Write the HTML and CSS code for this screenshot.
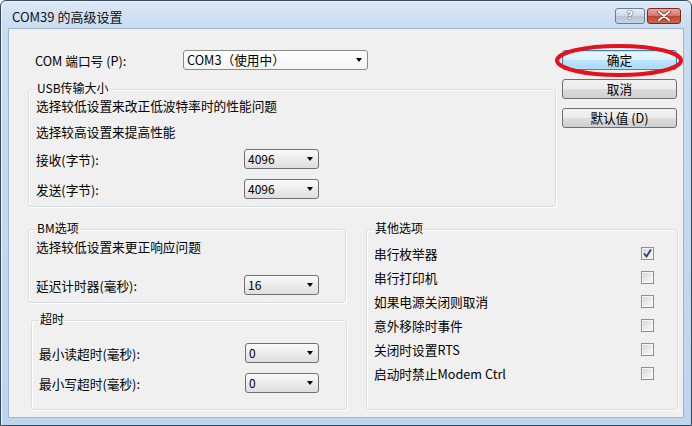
FILE: index.html
```html
<!DOCTYPE html>
<html lang="zh-CN">
<head>
    <meta charset="UTF-8">
    <meta name="viewport" content="width=device-width, initial-scale=1.0">
    <title>COM39 的高级设置</title>
    <link rel="stylesheet" href="styles.css">
</head>
<body>

<div class="window">
    <div class="titlebar">
        <span class="title">COM39 的高级设置</span>
        <div class="caption-buttons">
            <span class="cap help">?</span>
            <span class="cap close">
                <svg width="14" height="10" viewBox="0 0 14 10">
                    <path d="M2 1 L12 9 M12 1 L2 9" stroke="#5a1a10" stroke-width="3.4" stroke-linecap="round"/>
                    <path d="M2 1 L12 9 M12 1 L2 9" stroke="#fff" stroke-width="2.2" stroke-linecap="round"/>
                </svg>
            </span>
        </div>
    </div>

    <div class="client">
        <div class="top">
            <div class="left">
                <div class="port-row">
                    <span class="port-label">COM 端口号 (P):</span>
                    <div class="combo port-combo">COM3（使用中）<i class="arrow"></i></div>
                </div>

                <fieldset class="group usb">
                    <legend>USB传输大小</legend>
                    <p class="note">选择较低设置来改正低波特率时的性能问题</p>
                    <p class="note second">选择较高设置来提高性能</p>
                    <div class="field first">
                        <span class="field-label">接收(字节):</span>
                        <div class="combo">4096<i class="arrow"></i></div>
                    </div>
                    <div class="field">
                        <span class="field-label">发送(字节):</span>
                        <div class="combo">4096<i class="arrow"></i></div>
                    </div>
                </fieldset>
            </div>

            <div class="buttons">
                <div class="btn-wrap">
                    <button class="btn default">确定</button>
                    <svg class="mark" width="130" height="37" viewBox="0 0 130 37">
                        <ellipse cx="65" cy="18.5" rx="62" ry="14.5" fill="none" stroke="#e3121b" stroke-width="4"/>
                    </svg>
                </div>
                <button class="btn">取消</button>
                <button class="btn">默认值 (D)</button>
            </div>
        </div>

        <div class="bottom">
            <div class="left-col">
                <fieldset class="group bm">
                    <legend>BM选项</legend>
                    <p class="note">选择较低设置来更正响应问题</p>
                    <div class="field latency">
                        <span class="field-label">延迟计时器(毫秒):</span>
                        <div class="combo">16<i class="arrow"></i></div>
                    </div>
                </fieldset>

                <fieldset class="group timeout">
                    <legend>超时</legend>
                    <div class="field first">
                        <span class="field-label">最小读超时(毫秒):</span>
                        <div class="combo">0<i class="arrow"></i></div>
                    </div>
                    <div class="field">
                        <span class="field-label">最小写超时(毫秒):</span>
                        <div class="combo">0<i class="arrow"></i></div>
                    </div>
                </fieldset>
            </div>

            <fieldset class="group other">
                <legend>其他选项</legend>
                <div class="option">
                    <span>串行枚举器</span>
                    <span class="check checked">
                        <svg width="11" height="11" viewBox="0 0 11 11">
                            <path d="M2 5.5 L4.5 8.5 L9 1.5" fill="none" stroke="#2a3c78" stroke-width="1.8"/>
                        </svg>
                    </span>
                </div>
                <div class="option"><span>串行打印机</span><span class="check"></span></div>
                <div class="option"><span>如果电源关闭则取消</span><span class="check"></span></div>
                <div class="option"><span>意外移除时事件</span><span class="check"></span></div>
                <div class="option"><span>关闭时设置RTS</span><span class="check"></span></div>
                <div class="option"><span>启动时禁止Modem Ctrl</span><span class="check"></span></div>
            </fieldset>
        </div>
    </div>
</div>

</body>
</html>
```

FILE: styles.css
```css
/* Reset */
* {
    box-sizing: border-box;
    margin: 0;
    padding: 0;
}

body {
    width: 692px;
    height: 426px;
    overflow: hidden;
    font-family: "Noto Sans CJK SC", "Noto Sans", sans-serif;
    font-size: 12.7px;
    color: #000;
    background: #fff;
}

/* Window frame */
.window {
    width: 692px;
    height: 426px;
    border: 1px solid #34485e;
    border-radius: 6px 6px 0 0;
    background: linear-gradient(#dbe8f6, #c9dcf0 27px, #bfd5ed);
    box-shadow: inset 1px 1px 0 #eef5fc;
    display: flex;
    flex-direction: column;
}

.titlebar {
    height: 27px;
    display: flex;
    justify-content: space-between;
}

.title {
    padding: 8px 0 0 11px;
    font-size: 13px;
    line-height: 16px;
    color: #111;
}

.caption-buttons {
    display: flex;
    gap: 2px;
    margin: 7px 10px 0 0;
}

.cap {
    height: 16px;
    border-radius: 3px;
    display: flex;
    align-items: center;
    justify-content: center;
}

.help {
    width: 30px;
    border: 1px solid #6b7d92;
    background: linear-gradient(#e6eef7, #cdd9e7 50%, #b6c7da 50%, #c4d3e4);
    color: #fff;
    font-family: "DejaVu Sans", sans-serif;
    font-weight: bold;
    font-size: 11px;
    line-height: 14px;
    text-shadow: 0 0 2px #3c4b5e, 0 0 1px #3c4b5e;
}

.close {
    width: 34px;
    border: 1px solid #7a2a1f;
    background: linear-gradient(#e9a898, #d47763 50%, #c2442d 50%, #d0664c);
}

/* Client area */
.client {
    height: 390px;
    margin: 0 7px;
    border: 1px solid #9fb5cd;
    background: #f0f0f0;
}

.top {
    display: flex;
    padding-top: 21px;
}

.left {
    width: 528px;
    margin-left: 19px;
}

.port-row {
    display: flex;
    align-items: center;
    height: 20px;
    padding-left: 7px;
}

.port-label {
    width: 148px;
}

/* Combo boxes */
.combo {
    position: relative;
    width: 75px;
    height: 20px;
    line-height: 18px;
    padding-left: 3px;
    border: 1px solid #707070;
    border-radius: 3px;
    background: linear-gradient(#fbfbfb, #ececec 50%, #dedede);
    font-size: 12px;
}

.port-combo {
    width: 185px;
    font-size: 12.7px;
    background: linear-gradient(#ffffff, #f4f4f4);
    border-color: #8a8a8a;
}

.arrow {
    position: absolute;
    right: 5px;
    top: 7px;
    border-left: 3.5px solid transparent;
    border-right: 3.5px solid transparent;
    border-top: 4px solid #000;
}

/* Group boxes */
.group {
    border: 1px solid #d5dfe5;
    border-radius: 3px;
    padding: 0 0 0 7px;
    box-shadow: inset 1px 1px 0 #fff, 1px 1px 0 #fff;
}

.group legend {
    padding: 0 1px 2px;
    font-size: 12px;
    line-height: 12px;
}

.note {
    height: 18px;
    line-height: 18px;
}

.usb .note {
    margin-top: 1px;
}

.usb .note.second {
    margin-top: 8px;
}

.field {
    display: flex;
    align-items: center;
    margin-top: 10px;
}

.field-label {
    width: 208px;
}

.usb {
    margin-top: 12px;
    padding-bottom: 7px;
}

.usb .field.first {
    margin-top: 8px;
}

/* Bottom section */
.bottom {
    display: flex;
    align-items: flex-start;
    margin-top: 15px;
}

.left-col {
    width: 319px;
    margin-left: 19px;
}

.bm {
    width: 318px;
    padding-bottom: 7px;
}

.bm .note {
    margin-top: 2px;
}

.bm .field.latency {
    margin-top: 19px;
}

.timeout {
    width: 316px;
    margin: 10px 0 0 3px;
    padding-bottom: 16px;
}

.timeout .field-label {
    width: 206px;
}

.timeout .combo {
    width: 74px;
}

.timeout .field.first {
    margin-top: 16px;
}

.other {
    width: 312px;
    margin-left: 19px;
    padding-top: 5px;
    padding-bottom: 24px;
}

.option {
    display: flex;
    align-items: center;
    height: 24px;
}

.option span:first-child {
    width: 267px;
}

.check {
    width: 13px;
    height: 13px;
    border: 1px solid #8e8f8f;
    background: linear-gradient(135deg, #cdd0d5, #eeeeee 60%, #f8f8f8);
    box-shadow: inset 0 0 0 1px #f4f4f4;
    display: flex;
    align-items: center;
    justify-content: center;
}

/* Buttons */
.buttons {
    display: flex;
    flex-direction: column;
    gap: 9px;
    margin-left: 6px;
}

.btn-wrap {
    position: relative;
}

.btn {
    width: 115px;
    height: 20px;
    border: 1px solid #707070;
    border-radius: 3px;
    background: linear-gradient(#f2f2f2, #ebebeb 50%, #dddddd 50%, #cfcfcf);
    font-family: inherit;
    font-size: 12.7px;
    line-height: 18px;
    color: #000;
}

.btn.default {
    display: block;
    border-color: #3c7fb1;
    background: linear-gradient(#eaf6fd, #d9f0fc 50%, #bee6fd 50%, #a7d9f5);
    box-shadow: inset 0 0 0 1px #b6e3f7;
}

.mark {
    position: absolute;
    left: -8px;
    top: -8px;
}
```
